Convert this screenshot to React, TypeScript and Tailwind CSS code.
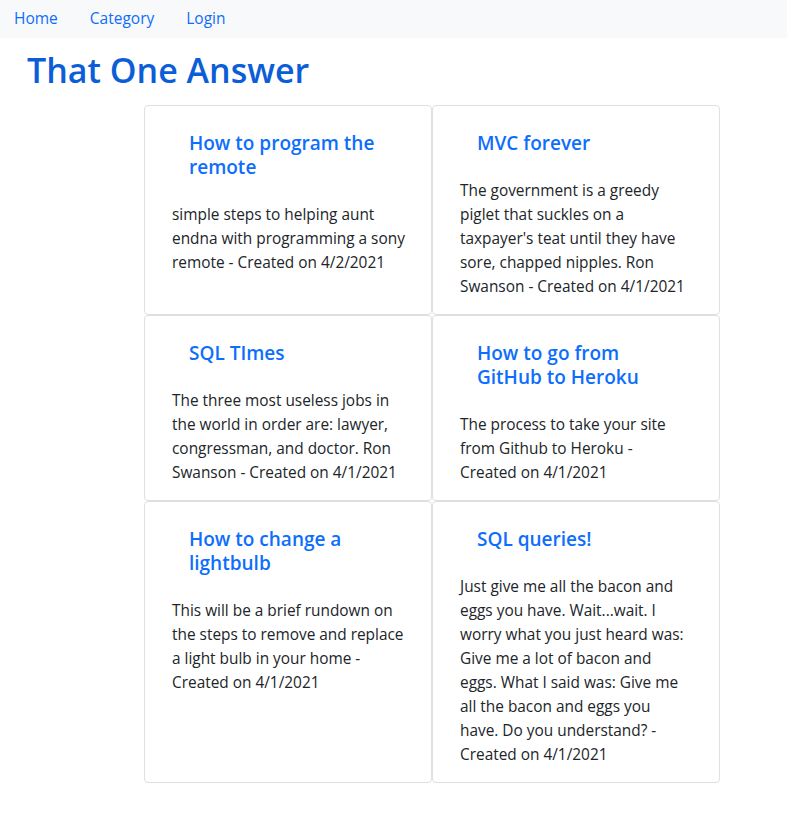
import React from 'react';

type Answer = {
  title: string;
  lines: string[];
};

// lines kept as in the original page so wrapping stays put
const answers: Answer[] = [
  {
    title: 'How to program the remote',
    lines: ['simple steps to helping aunt', 'endna with programming a sony', 'remote - Created on 4/2/2021'],
  },
  {
    title: 'MVC forever',
    lines: [
      'The government is a greedy',
      'piglet that suckles on a',
      "taxpayer's teat until they have",
      'sore, chapped nipples. Ron',
      'Swanson - Created on 4/1/2021',
    ],
  },
  {
    title: 'SQL TImes',
    lines: [
      'The three most useless jobs in',
      'the world in order are: lawyer,',
      'congressman, and doctor. Ron',
      'Swanson - Created on 4/1/2021',
    ],
  },
  {
    title: 'How to go from GitHub to Heroku',
    lines: ['The process to take your site', 'from Github to Heroku -', 'Created on 4/1/2021'],
  },
  {
    title: 'How to change a lightbulb',
    lines: [
      'This will be a brief rundown on',
      'the steps to remove and replace',
      'a light bulb in your home -',
      'Created on 4/1/2021',
    ],
  },
  {
    title: 'SQL queries!',
    lines: [
      'Just give me all the bacon and',
      'eggs you have. Wait...wait. I',
      'worry what you just heard was:',
      'Give me a lot of bacon and',
      'eggs. What I said was: Give me',
      'all the bacon and eggs you',
      'have. Do you understand? -',
      'Created on 4/1/2021',
    ],
  },
];

function AnswerCard({ title, lines }: Answer) {
  return (
    <div className="bg-white border border-[#dfdfdf] rounded-[4px] pt-[25px] pb-[15px] px-[27px]">
      {/* titulo */}
      <a href="#" className="block pl-[17px] pr-[17px] text-[19px] leading-6 font-semibold text-[#0d6efd]">
        {title}
      </a>
      <p className="mt-[24px] text-[15.4px] leading-6 text-[#212529]">
        {lines.map((line, i) => (
          <span key={i} className="block whitespace-nowrap">
            {line}
          </span>
        ))}
      </p>
    </div>
  );
}

export default function App() {
  return (
    <div className="min-h-screen bg-white font-['Open_Sans',sans-serif]">
      <nav className="bg-[#f8f9fa] h-[38px] flex items-center pl-[14px] gap-8 text-[15.5px] text-[#0d6efd]">
        <a href="#">Home</a>
        <a href="#">Category</a>
        <a href="#">Login</a>
      </nav>

      <h1 className="ml-[27px] mt-[12px] text-[34px] leading-[40px] font-semibold text-[#0b5ed7]">
        That One Answer
      </h1>

      <div className="ml-[144px] mt-[15px] w-[576px] grid grid-cols-2">
        {answers.map((a, i) => (
          <AnswerCard key={i} {...a} />
        ))}
      </div>
    </div>
  );
}
